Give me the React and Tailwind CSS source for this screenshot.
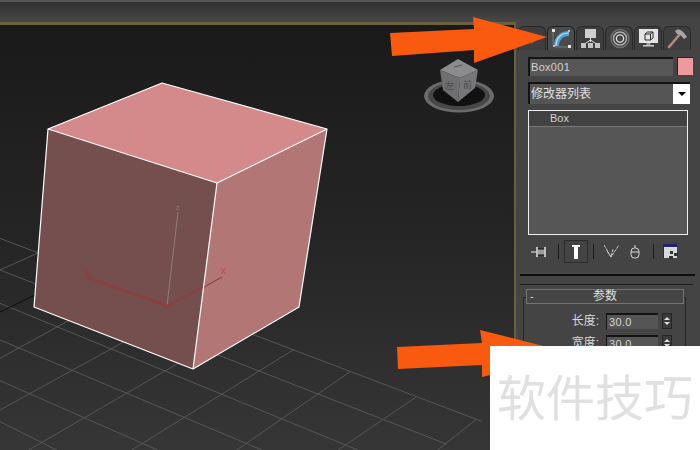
import React from "react";

const cjk = { fontFamily: '"Liberation Sans", "Noto Sans CJK SC", sans-serif' };

// grid lines, measured as y = m*x + c in 3x crop coordinates
const linesA = [
  [0.38, 40, 1446],
  [0.39, 135, 1340],
  [0.41, 235, 1230],
  [0.42, 345, 1230],
  [0.44, 467, 1230],
  [0.5, 590, 1230],
];
const linesB = [
  [-0.45, 135, 190],
  [-0.55, 400, 387],
  [-0.55, 555, 553],
  [-0.58, 725, 713],
  [-0.62, 920, 880],
  [-0.69, 1165, 1051],
  [-0.68, 1365, 1250],
  [-0.79, 1712, 1429],
];

function Viewport() {
  const toLine = ([m, c, end], i, key) => (
    <line
      key={key + i}
      x1={0}
      y1={225 + c / 3}
      x2={end / 3}
      y2={225 + (m * end + c) / 3}
      stroke="#565656"
      strokeWidth="1"
    />
  );

  return (
    <div className="flex-1 h-full border-t-[3px] border-r-2 border-[#6b5f40] bg-linear-to-b from-[#1a1a1a] via-[#252525] to-[#363636] overflow-hidden">
      <svg width="514" height="425" viewBox="0 25 514 425" className="block">
        {linesA.map((l, i) => toLine(l, i, "a"))}
        {linesB.map((l, i) => toLine(l, i, "b"))}
        <line x1="0" y1="312" x2="35" y2="295" stroke="#0c0c0c" strokeWidth="1" />

        {/* box */}
        <polygon points="162,83 327,129 217,183 48,129" fill="#d48a8a" />
        <polygon points="48,129 217,183 193,369 34,307" fill="#754f4e" />
        <polygon points="327,129 299,307 193,369 217,183" fill="#b27674" />

        {/* gizmo */}
        <line x1="167" y1="306" x2="178" y2="212" stroke="#8f7d7c" strokeWidth="1" />
        <text x="176" y="210" fontSize="7" fill="#8f7d7c" fontFamily="Liberation Sans">z</text>
        <line x1="167" y1="306" x2="87" y2="277" stroke="#8a4140" strokeWidth="2.5" />
        <line x1="87" y1="277" x2="87" y2="270" stroke="#8a4140" strokeWidth="3" />
        <line x1="167" y1="306" x2="204" y2="287" stroke="#8a4140" strokeWidth="2.5" />
        <line x1="204" y1="287" x2="222" y2="277" stroke="#8e3338" strokeWidth="1" />
        <text x="221" y="274" fontSize="10" fill="#c2484c" fontFamily="Liberation Sans">x</text>

        <g stroke="#ffffff" strokeWidth="1.2" fill="none" strokeLinejoin="round">
          <polygon points="162,83 327,129 299,307 193,369 34,307 48,129" />
          <polyline points="48,129 217,183 327,129" />
          <line x1="217" y1="183" x2="193" y2="369" />
        </g>

        {/* view cube */}
        <ellipse cx="459" cy="96" rx="35" ry="16.5" fill="#6c6c6c" />
        <ellipse cx="459" cy="96" rx="31" ry="14" fill="#474747" />
        <ellipse cx="459" cy="95" rx="26" ry="11" fill="#111111" />
        <polygon points="458,59 478,70 460,78 440,70" fill="#8b8b8d" />
        <polygon points="440,70 460,78 458,102 443,90" fill="#6f6f71" />
        <polygon points="478,70 475,88 458,102 460,78" fill="#77777a" />
        <text x="445" y="89" fontSize="9" fill="#4a4a4a" style={cjk}>左</text>
        <text x="463" y="88" fontSize="9" fill="#4a4a4a" style={cjk}>前</text>
        <line x1="454" y1="67" x2="462" y2="65" stroke="#565656" strokeWidth="1" />
      </svg>
    </div>
  );
}

const tabIcons = [
  <g key="create" stroke="#6f6f6f" strokeWidth="1">
    <line x1="10" y1="6" x2="10" y2="16" />
    <line x1="5" y1="11" x2="15" y2="11" />
  </g>,
  <g key="modify">
    <path d="M3 18 C3 9 9 3 18 3 V8 C12 8 8 12 8 18 Z" fill="#4f9fd8" />
    <path d="M5 18 C5 10 10 5 18 5" fill="none" stroke="#bfe2f7" strokeWidth="1.2" />
    <rect x="1" y="1" width="3" height="3" fill="#e6e6e6" />
    <rect x="17" y="17" width="3" height="3" fill="#e6e6e6" />
    <rect x="17" y="2" width="2" height="2" fill="#bbbbbb" />
    <rect x="2" y="17" width="2" height="2" fill="#bbbbbb" />
    <path d="M2 4 V17 M4 19 H17" stroke="#9a9a9a" strokeWidth="0.6" />
  </g>,
  <g key="hierarchy">
    <rect x="5" y="1" width="11" height="9" fill="#cfcfcf" />
    <path d="M10.5 10 V14 M3 17 L10.5 12 L18 17" stroke="#e2e2e2" strokeWidth="1" fill="none" />
    <rect x="1" y="15" width="5" height="5" fill="#c4c4c4" />
    <rect x="8" y="15" width="5" height="5" fill="#c4c4c4" />
    <rect x="15" y="15" width="5" height="5" fill="#c4c4c4" />
  </g>,
  <g key="motion" fill="none">
    <circle cx="11" cy="10.5" r="9" stroke="#6e6e6e" strokeWidth="1.5" />
    <circle cx="11" cy="10.5" r="6.5" stroke="#b0b0b0" strokeWidth="1.5" />
    <circle cx="11" cy="10.5" r="3.6" stroke="#e0e0e0" strokeWidth="1.4" />
    <circle cx="11" cy="10.5" r="1.2" fill="#555555" />
  </g>,
  <g key="display">
    <rect x="1" y="1" width="19" height="14" fill="#e4e4e4" />
    <path d="M7 6 L9.5 4 H15 V10 L12.5 12 H7 Z M7 6 H12.5 V12 M12.5 6 L15 4" fill="none" stroke="#2b2b2b" strokeWidth="1" />
    <rect x="8.5" y="15" width="4" height="2" fill="#9d9d9d" />
    <rect x="5" y="17" width="11" height="1.5" fill="#c9c9c9" />
  </g>,
  <g key="utilities">
    <path d="M2 19 L13 6" stroke="#b58a7e" strokeWidth="2.6" strokeLinecap="round" />
    <path d="M8 3 C11 0 15 1 20 9 L17 11 C14 7 12 6 10 6 Z" fill="#a7a7a7" />
  </g>,
];

function TabIcon({ children }) {
  return (
    <svg width="21" height="21" viewBox="0 0 21 21" className="block">
      {children}
    </svg>
  );
}

function Tabs() {
  return (
    <div className="mt-px ml-[2px] flex gap-px">
      {tabIcons.map((icon, i) => (
        <div
          key={i}
          className={
            "w-[28px] h-[24px] rounded-t-md border border-b-0 flex items-center justify-center " +
            (i === 1 ? "bg-[#4b4b4b] border-[#1f1f1f]" : "bg-[#3e3e3e] border-[#2a2a2a]")
          }
        >
          <TabIcon>{icon}</TabIcon>
        </div>
      ))}
    </div>
  );
}

function Toolbar() {
  return (
    <div className="mt-[5px] ml-[15px] h-[23px] flex items-center">
      <svg width="17" height="12" viewBox="0 0 17 12" className="block">
        <path d="M0 6 H6" stroke="#e8e8e8" strokeWidth="1" />
        <rect x="6" y="3" width="8" height="6" fill="#9c9c9c" stroke="#111111" />
        <path d="M6 1 V11 M14 1 V11" stroke="#e8e8e8" strokeWidth="1.5" />
      </svg>
      <div className="ml-[10px] w-px h-[15px] bg-[#1c1c1c]" />
      <div className="ml-[5px] w-[24px] h-[23px] border border-[#2a2a2a] flex items-center justify-center">
        <svg width="8" height="14" viewBox="0 0 8 14" className="block">
          <path d="M0 0 H8 V2 H6 V14 H2 V2 H0 Z" fill="#ffffff" />
        </svg>
      </div>
      <div className="ml-[5px] w-px h-[15px] bg-[#1c1c1c]" />
      <svg width="15" height="15" viewBox="0 0 15 15" className="block ml-[10px]">
        <path d="M0 1 L7 13 L15 1 M3 7 L7 13 L9 5" stroke="#d0d0d0" strokeWidth="1" fill="none" strokeDasharray="3 1" />
      </svg>
      <svg width="10" height="15" viewBox="0 0 10 15" className="block ml-[11px]">
        <rect x="1" y="4" width="8" height="10" rx="3.5" fill="none" stroke="#d8d8d8" />
        <path d="M1 8 H9 M5 4 V1" stroke="#d8d8d8" strokeWidth="1" />
      </svg>
      <div className="ml-[13px] w-px h-[15px] bg-[#1c1c1c]" />
      <svg width="16" height="16" viewBox="0 0 16 16" className="block ml-[9px]">
        <rect x="0" y="0" width="14" height="14" fill="#d8d8d8" />
        <rect x="0" y="0" width="14" height="3" fill="#23236b" />
        <rect x="0" y="3" width="1" height="11" fill="#23236b" />
        <path d="M7 7 H10 V10 H7 Z M11 9 H15 V12 H11 Z M6 12 H10 V15 H6 Z" fill="#333333" />
      </svg>
    </div>
  );
}

function Spinner() {
  return (
    <div className="w-[10px] h-[16px] bg-[#3a3a3a] border border-[#262626] flex flex-col items-center justify-center gap-[2px]">
      <div className="w-0 h-0 border-x-[3px] border-x-transparent border-b-[3px] border-b-[#dddddd]" />
      <div className="w-0 h-0 border-x-[3px] border-x-transparent border-t-[3px] border-t-[#dddddd]" />
    </div>
  );
}

function ParamRow({ label, value, className }) {
  return (
    <div className={"flex items-center " + (className || "")}>
      <div className="w-[75px] text-right text-[12px] leading-none text-[#d8d8d8]" style={cjk}>
        {label}
      </div>
      <div className="ml-[7px] w-[52px] h-[16px] bg-[#555555] border-t-2 border-l border-[#141414] pl-[2px] text-[11px] leading-[14px] text-[#d4d4d4] tracking-[0.3px]" style={cjk}>
        {value}
      </div>
      <div className="ml-[4px]">
        <Spinner />
      </div>
    </div>
  );
}

function Panel() {
  return (
    <div className="w-[184px] h-full pt-[3px] bg-[#444444] flex flex-col overflow-hidden">
      <Tabs />

      <div className="mt-[7px] ml-[12px] flex">
        <div className="w-[145px] h-[19px] bg-[#575757] border-t-2 border-l-2 border-[#141414] pl-[1px] text-[11px] leading-[16px] text-[#d2d2d2] tracking-[0.3px]" style={cjk}>
          Box001
        </div>
        <div className="ml-[4px] w-[16px] h-[18px] bg-[#ec9a9e] border-t border-l border-[#222222]" />
      </div>

      <div className="mt-[6px] ml-[12px] w-[162px] h-[22px] flex bg-[#555555] border-t-2 border-l-2 border-[#141414]">
        <div className="flex-1 pl-[1px] text-[12px] leading-[20px] text-[#e0e0e0]" style={cjk}>
          修改器列表
        </div>
        <div className="w-[17px] bg-white flex items-center justify-center">
          <div className="w-0 h-0 border-x-[4px] border-x-transparent border-t-[4px] border-t-black" />
        </div>
      </div>

      <div className="mt-[6px] ml-[12px] w-[160px] h-[125px] border border-[#efefef] bg-[#565656]">
        <div className="h-[16px] bg-[#424242] border-b border-[#777777] pl-[21px] text-[11px] leading-[15px] text-[#d0d0d0]" style={cjk}>
          Box
        </div>
      </div>

      <Toolbar />

      <div className="mt-[11px] ml-[4px] w-[175px] h-[2px] bg-[#0e0e0e]" />
      <div className="mt-[8px] ml-[4px] w-[173px] h-px bg-[#1c1c1c]" />

      <div className="relative z-10 mt-[4px] ml-[10px] w-[158px] h-[15px] shrink-0 bg-[#454545] border border-[#757575] flex items-center">
        <span className="ml-[3px] text-[11px] leading-none text-[#d8d8d8]" style={cjk}>-</span>
        <span className="absolute inset-0 text-center text-[12px] leading-[13px] text-[#e0e0e0]" style={cjk}>参数</span>
      </div>
      <div className="-mt-[7px] ml-[7px] w-[163px] h-[100px] shrink-0 border border-[#262626] pt-[15px]">
        <ParamRow label="长度:" value="30.0" />
        <ParamRow label="宽度:" value="30.0" className="mt-[6px]" />
      </div>
    </div>
  );
}

export default function App() {
  return (
    <div className="relative w-[700px] h-[450px] overflow-hidden bg-[#444444]">
      <div className="h-[22px] border-t-2 border-[#555555] bg-linear-to-b from-[#323232] to-[#474747]" />
      <div className="flex h-[428px]">
        <Viewport />
        <Panel />
      </div>

      {/* callout arrows drawn on top of the screenshot */}
      <svg width="700" height="450" viewBox="0 0 700 450" className="absolute inset-0">
        <polygon points="390,33 474,29 473,17 547,37 474,63 474,50 392,56" fill="#fa5a10" />
        <polygon points="397,347 482,343 480,330 575,354 482,377 482,365 398,369" fill="#fa5a10" />
      </svg>

      {/* watermark */}
      <div
        className="absolute left-[490px] top-[346px] w-[210px] h-[104px] bg-white pl-[7px] pt-[13px] text-[49px] leading-[72px] text-[#e0e0e0] whitespace-nowrap"
        style={{ fontFamily: '"Noto Sans CJK SC", sans-serif' }}
      >
        软件技巧
      </div>
    </div>
  );
}
